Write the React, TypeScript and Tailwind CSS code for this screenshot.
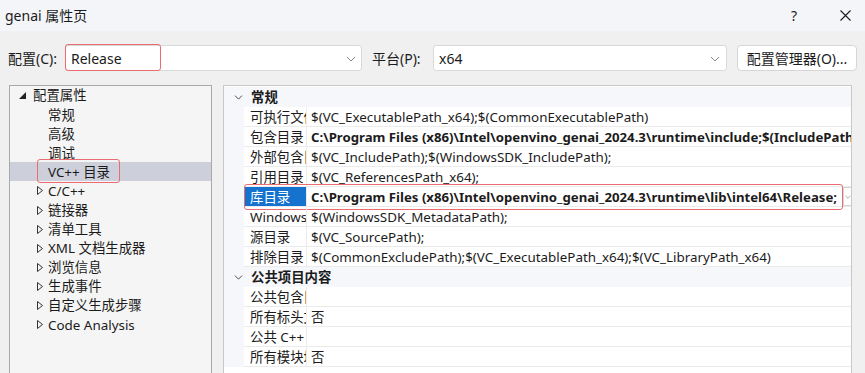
import { ChevronDown } from 'lucide-react';

const font = "font-['Noto_Sans','Noto_Sans_CJK_SC',sans-serif]";

type TreeItem = { label: string; expandable?: boolean; selected?: boolean };

const treeItems: TreeItem[] = [
  { label: '常规' },
  { label: '高级' },
  { label: '调试' },
  { label: 'VC++ 目录', selected: true },
  { label: 'C/C++', expandable: true },
  { label: '链接器', expandable: true },
  { label: '清单工具', expandable: true },
  { label: 'XML 文档生成器', expandable: true },
  { label: '浏览信息', expandable: true },
  { label: '生成事件', expandable: true },
  { label: '自定义生成步骤', expandable: true },
  { label: 'Code Analysis', expandable: true },
];

type Prop = { name: string; value: string; bold?: boolean; selected?: boolean };

const general: Prop[] = [
  { name: '可执行文件目录', value: '$(VC_ExecutablePath_x64);$(CommonExecutablePath)' },
  {
    name: '包含目录',
    value: 'C:\\Program Files (x86)\\Intel\\openvino_genai_2024.3\\runtime\\include;$(IncludePath)',
    bold: true,
  },
  { name: '外部包含目录', value: '$(VC_IncludePath);$(WindowsSDK_IncludePath);' },
  { name: '引用目录', value: '$(VC_ReferencesPath_x64);' },
  {
    name: '库目录',
    value: 'C:\\Program Files (x86)\\Intel\\openvino_genai_2024.3\\runtime\\lib\\intel64\\Release;',
    bold: true,
    selected: true,
  },
  { name: 'Windows 运行库目录', value: '$(WindowsSDK_MetadataPath);' },
  { name: '源目录', value: '$(VC_SourcePath);' },
  { name: '排除目录', value: '$(CommonExcludePath);$(VC_ExecutablePath_x64);$(VC_LibraryPath_x64)' },
];

const shared: Prop[] = [
  { name: '公共包含目录', value: '' },
  { name: '所有标头文件均为公共', value: '否' },
  { name: '公共 C++ 模块目录', value: '' },
  { name: '所有模块均为公共', value: '否' },
];

function SmallChevron({ className }: { className?: string }) {
  return (
    <svg className={className} width="10" height="6" viewBox="0 0 10 6" fill="none" stroke="currentColor" strokeWidth={1}>
      <path d="M1 1l4 4 4-4" />
    </svg>
  );
}

function Combo({ value, width, chevronRight }: { value: string; width: string; chevronRight: string }) {
  return (
    <div className={`${width} h-[26px] bg-white border border-[#d9d9d9] rounded-[3px] flex items-center relative`}>
      <span className="pl-[5px] text-[14px] text-[#1b1b1b]">{value}</span>
      <SmallChevron className={`absolute ${chevronRight} top-[10px] text-[#8a8a8a]`} />
    </div>
  );
}

function PropRow({ p }: { p: Prop }) {
  return (
    <div className="flex h-[20px] relative">
      <div className="w-[20px] shrink-0 bg-[#f5f7fa]" />
      <div
        className={`w-[63px] shrink-0 border-r border-b border-[#ebebeb] overflow-hidden whitespace-nowrap pl-[6px] pt-[1px] leading-[18px] ${
          p.selected ? 'bg-[#1672cf] text-white' : 'text-[#1b1b1b]'
        }`}
      >
        {p.name}
      </div>
      <div
        className={`flex-1 min-w-0 border-b border-[#ebebeb] overflow-hidden whitespace-nowrap pl-[4px] pt-[1px] leading-[18px] text-[#1b1b1b] ${
          p.bold ? 'font-bold text-[13.2px]' : ''
        }`}
      >
        {p.value}
      </div>
      {p.selected && (
        <>
          <div className="absolute right-0 top-0 w-[8px] h-[19px] bg-white border-l border-y border-[#d4d4d4] flex items-center justify-center">
            <SmallChevron className="w-[6px] text-[#7a7a7a]" />
          </div>
          <div className="absolute left-[20px] right-[8px] top-[-3px] bottom-[-3px] border-[1.5px] border-[#ec6b71] rounded-[3px] pointer-events-none" />
        </>
      )}
    </div>
  );
}

function Category({ title }: { title: string }) {
  return (
    <div className="flex items-center h-[20px] bg-[#f5f7fa]">
      <ChevronDown className="w-[13px] h-[13px] ml-[8px] text-[#333]" strokeWidth={1.6} />
      <span className="ml-[6px] font-bold text-[#1b1b1b]">{title}</span>
    </div>
  );
}

export default function App() {
  return (
    <div className={`w-[865px] h-[373px] overflow-hidden bg-[#f0f0f0] ${font} text-[13.4px] text-[#1b1b1b]`}>
      <div className="h-[31px] bg-[#f3f5f9] flex items-center relative">
        <span className="pl-[5px] text-[14px]">genai 属性页</span>
        <span className="absolute left-[791px] top-[5px] text-[14px]">?</span>
        <svg className="absolute left-[840px] top-[10px]" width="11" height="11" viewBox="0 0 11 11" stroke="#1b1b1b" strokeWidth={1.1}>
          <path d="M0.5 0.5l10 10M10.5 0.5l-10 10" />
        </svg>
      </div>

      <div className="flex items-center h-[26px] mt-[14px] pl-[8px]">
        <span className="w-[57px] text-[14px]">配置(C):</span>
        <div className="relative">
          <Combo value="Release" width="w-[297px]" chevronRight="right-[5px]" />
          <div className="absolute left-0 top-[-1px] w-[96px] h-[27px] border-[1.5px] border-[#ec6b71] rounded-[3px]" />
        </div>
        <span className="ml-[10px] w-[61px] text-[14px]">平台(P):</span>
        <Combo value="x64" width="w-[294px]" chevronRight="right-[6px]" />
        <button className="ml-[10px] w-[120px] h-[26px] bg-white border border-[#d6d6d6] rounded-[4px] text-[14px] text-[#1b1b1b]">
          配置管理器(O)...
        </button>
      </div>

      <div className="flex mt-[14px] pl-[9px] gap-[11px] h-[400px]">
        <div className="w-[203px] border border-[#a9a9a9] bg-[#f5f5f5]">
          <div className="flex items-center h-[19px]">
            <svg className="ml-[9px]" width="7" height="7" viewBox="0 0 7 7">
              <path d="M7 0V7H0Z" fill="#222" />
            </svg>
            <span className="ml-[7px]">配置属性</span>
          </div>
          {treeItems.map((t) => (
            <div key={t.label} className={`flex items-center h-[19.1px] relative ${t.selected ? 'bg-[#cdd0da]' : ''}`}>
              <div className="w-[38px] shrink-0 flex justify-end pr-[5px]">
                {t.expandable && (
                  <svg width="6" height="9" viewBox="0 0 6 9" fill="none" stroke="#333" strokeWidth={1}>
                    <path d="M0.5 0.5L5.5 4.5L0.5 8.5Z" />
                  </svg>
                )}
              </div>
              <span className="whitespace-nowrap">{t.label}</span>
              {t.selected && (
                <div className="absolute left-[27px] w-[83px] top-[-3px] bottom-[-2px] border-[1.5px] border-[#ec6b71] rounded-[3px]" />
              )}
            </div>
          ))}
        </div>

        <div className="w-[629px] border border-[#c8c8c8] bg-white pt-[1px]">
          <Category title="常规" />
          {general.map((p) => (
            <PropRow key={p.name} p={p} />
          ))}
          <Category title="公共项目内容" />
          {shared.map((p) => (
            <PropRow key={p.name} p={p} />
          ))}
        </div>
      </div>
    </div>
  );
}
